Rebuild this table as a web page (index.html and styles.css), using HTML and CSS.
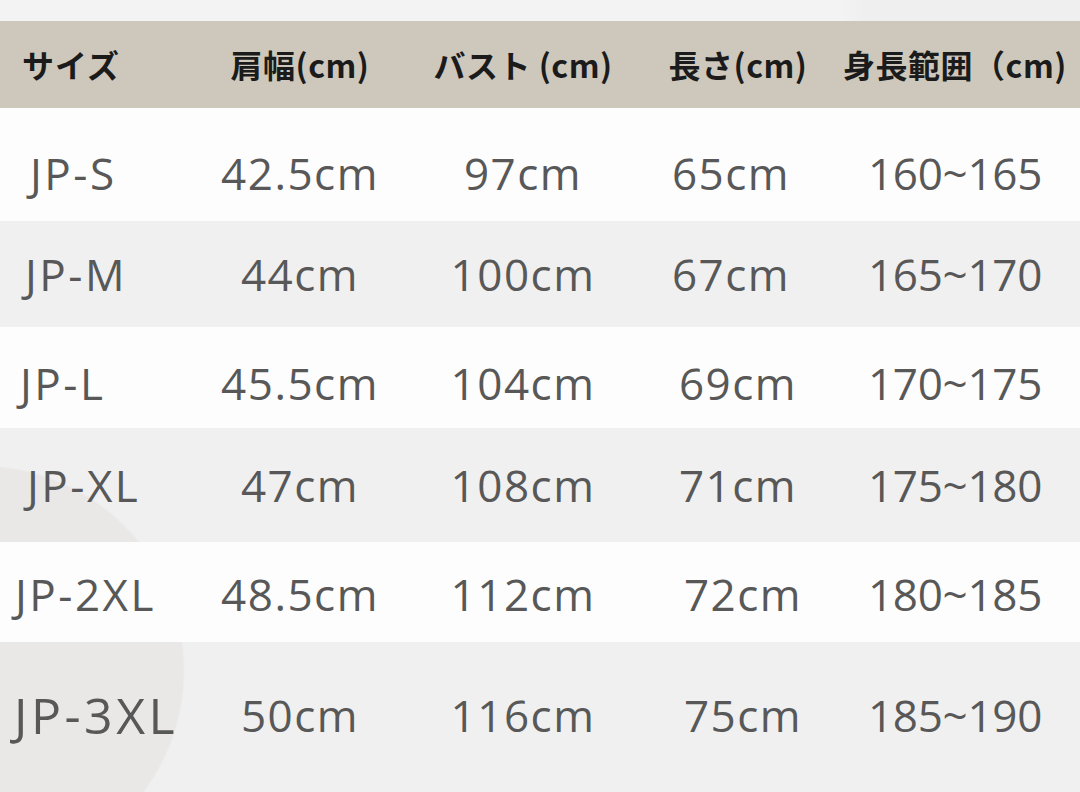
FILE: index.html
```html
<!DOCTYPE html>
<html lang="ja">
<head>
<meta charset="utf-8">
<title>サイズ表</title>
<link rel="stylesheet" href="styles.css">
</head>
<body>
<div class="page">
  <div class="topstrip"></div>
  <div class="row head">
    <div class="cell first">サイズ</div>
    <div class="cell">肩幅(cm)</div>
    <div class="cell">バスト (cm)</div>
    <div class="cell">長さ(cm)</div>
    <div class="cell">身長範囲（cm)</div>
  </div>
  <div class="row r1">
    <div class="cell first">JP-S</div>
    <div class="cell">42.5cm</div>
    <div class="cell">97cm</div>
    <div class="cell c4">65cm</div>
    <div class="cell range">160~165</div>
  </div>
  <div class="row alt r2">
    <div class="cell first">JP-M</div>
    <div class="cell">44cm</div>
    <div class="cell">100cm</div>
    <div class="cell c4">67cm</div>
    <div class="cell range">165~170</div>
  </div>
  <div class="row r3">
    <div class="cell first">JP-L</div>
    <div class="cell">45.5cm</div>
    <div class="cell">104cm</div>
    <div class="cell c4">69cm</div>
    <div class="cell range">170~175</div>
  </div>
  <div class="row alt r4">
    <div class="cell first">JP-XL</div>
    <div class="cell">47cm</div>
    <div class="cell">108cm</div>
    <div class="cell c4">71cm</div>
    <div class="cell range">175~180</div>
  </div>
  <div class="row r5">
    <div class="cell first">JP-2XL</div>
    <div class="cell">48.5cm</div>
    <div class="cell">112cm</div>
    <div class="cell c4">72cm</div>
    <div class="cell range">180~185</div>
  </div>
  <div class="row alt r6">
    <div class="cell first">JP-3XL</div>
    <div class="cell">50cm</div>
    <div class="cell">116cm</div>
    <div class="cell c4">75cm</div>
    <div class="cell range">185~190</div>
  </div>
</div>
</body>
</html>
```
FILE: styles.css
```css
* { box-sizing: border-box; }
html, body {
  margin: 0;
  padding: 0;
  background: #f0f0f0;
}
.page {
  width: 1080px;
  height: 792px;
  overflow: hidden;
  display: flex;
  flex-direction: column;
}
.topstrip {
  height: 21px;
  background: linear-gradient(90deg, #f3f3f3 0, #f3f3f3 78%, #efefef 80%, #efefef 100%);
}
.row {
  display: grid;
  grid-template-columns: 200px 200px 246px 184px 250px;
  align-items: center;
  background: #fdfdfd;
  font-family: "Open Sans", "Noto Sans", sans-serif;
  font-size: 44px;
  letter-spacing: 1.5px;
  color: #585858;
}
.row.alt {
  background: radial-gradient(circle 205px at -20px 670px, #e9e8e7 99%, #f0f0f0 100%) fixed;
}
.cell {
  text-align: center;
  white-space: nowrap;
}
.cell.range { letter-spacing: -0.3px; }
.cell.first {
  text-align: left;
  padding-left: 22px;
  letter-spacing: 2.5px;
}
.head {
  height: 87px;
  background: #cec8bc;
  font-family: "Noto Sans CJK JP", "Noto Sans", sans-serif;
  font-weight: 700;
  font-size: 32px;
  letter-spacing: 0.5px;
  color: #1b1b1b;
  padding-bottom: 2px;
}
.head .cell.first { letter-spacing: 1px; padding-left: 22px; }
.r1 { height: 113px; padding-top: 16px; }
.r2 { height: 106px; }
.r3 { height: 101px; padding-top: 10px; }
.r4 { height: 114px; }
.r5 { height: 100px; padding-top: 4px; }
.r6 { height: 150px; padding-bottom: 4px; }
.r1 .cell.first { padding-left: 30px; }
.r2 .cell.first { padding-left: 25px; }
.r3 .cell.first { padding-left: 20px; }
.r4 .cell.first { padding-left: 27px; }
.r5 .cell.first { padding-left: 15px; }
.r6 .cell.first { font-size: 50px; padding-left: 14px; letter-spacing: 3.5px; }
.r1 .c4, .r2 .c4 { padding-right: 14px; }
.r5 .c4, .r6 .c4 { padding-left: 10px; }
```
